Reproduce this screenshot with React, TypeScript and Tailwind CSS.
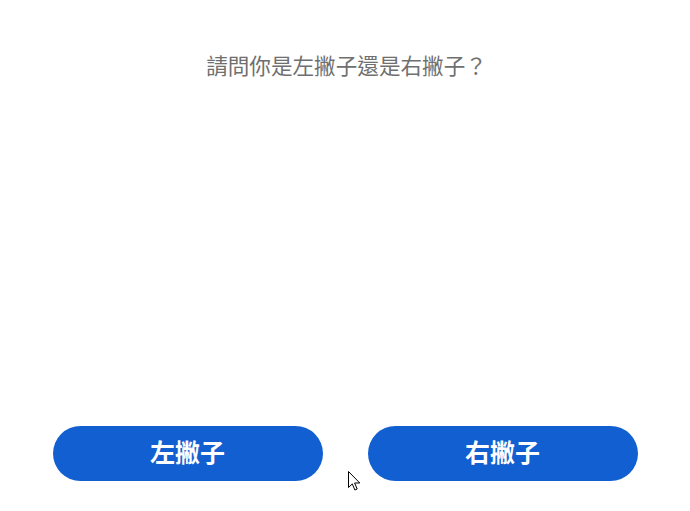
import React from "react";

const font = {
  fontFamily: '"Noto Sans CJK TC", "Noto Sans", sans-serif',
};

function Cursor() {
  return (
    <svg
      className="pointer-events-none absolute left-[348px] top-[471px]"
      width="13"
      height="21"
      viewBox="0 0 13 21"
    >
      <path
        d="M0.5 0.5 L0.5 16.5 L4.3 12.9 L6.9 19 L9.2 18 L6.6 12 L11.8 12 Z"
        fill="#fff"
        stroke="#000"
        strokeWidth="1"
        strokeLinejoin="round"
      />
    </svg>
  );
}

export default function App() {
  const choices = ["左撇子", "右撇子"];

  return (
    <div
      className="relative flex h-[511px] w-[690px] flex-col items-center bg-white"
      style={font}
    >
      <h1 className="pt-[49px] pl-[3px] text-[21.6px] font-normal leading-[32px] text-[#6f6f6f]">
        請問你是左撇子還是右撇子？
      </h1>

      <div className="flex-1" />

      <div className="flex gap-[45px] pb-[30px]">
        {choices.map((label) => (
          <button
            key={label}
            className="flex h-[55px] w-[270px] items-center justify-center rounded-full bg-[#125fd1] pb-[3px] text-[25px] font-bold text-white"
          >
            {label}
          </button>
        ))}
      </div>

      <Cursor />
    </div>
  );
}
